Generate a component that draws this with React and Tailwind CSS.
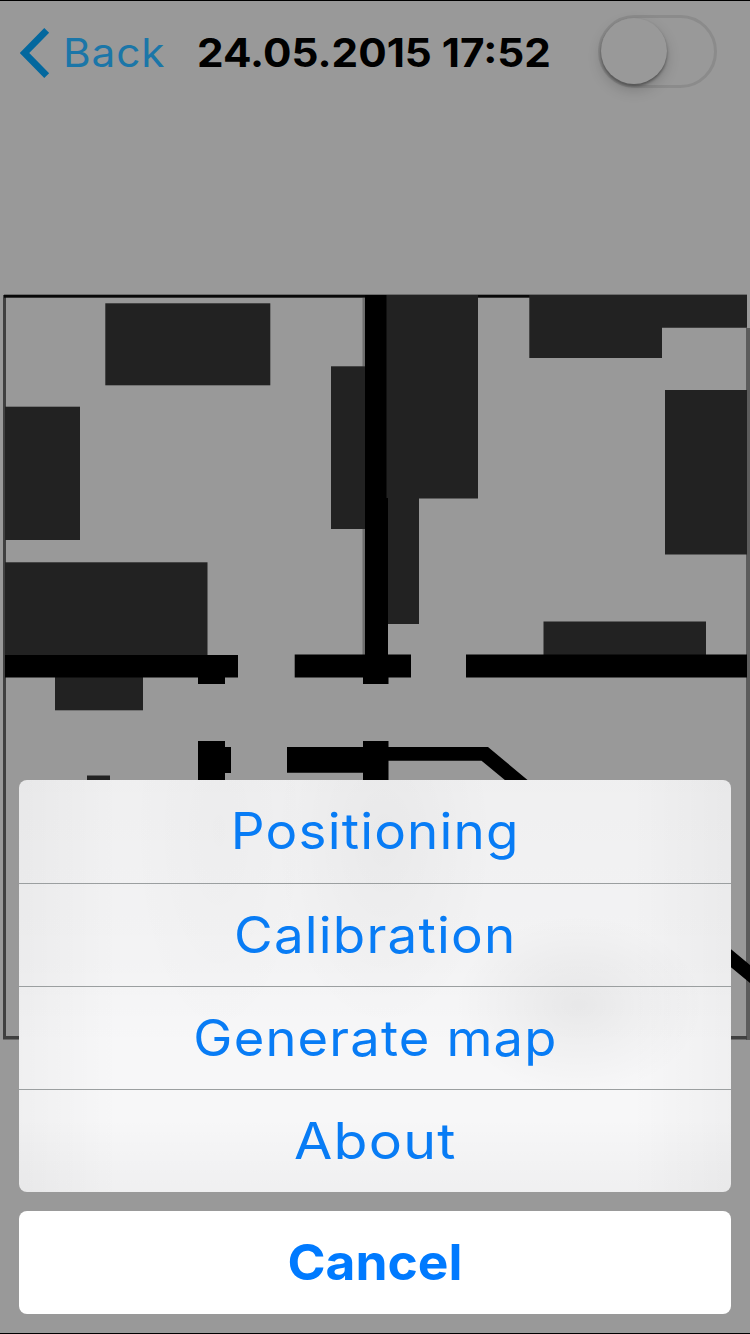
const actions = [
  { label: "Positioning", text: "scale-x-[1.06]" },
  { label: "Calibration", text: "scale-x-[1.06]" },
  { label: "Generate map", text: "scale-x-[1.05]" },
  { label: "About", text: "scale-x-[1.11]" },
];

function Header() {
  return (
    <header className="flex h-[103px] items-center pl-5">
      <button className="flex items-center text-[#04689e]">
        <svg className="h-[52px] w-[30px]" viewBox="0 0 30 52" fill="none" stroke="currentColor" strokeWidth="6.8">
          <path d="M26.7 3.3 4.6 26l22.1 22.7" />
        </svg>
        <span className="ml-[13px] w-[132px] origin-left scale-x-[1.085] whitespace-nowrap text-left text-[39px] leading-none tracking-[0.8px] text-[#1b76a8]">Back</span>
      </button>
      <h1 className="ml-[2px] w-[401px] origin-left scale-x-[1.083] whitespace-nowrap text-[39px] font-bold leading-none text-black">24.05.2015 17:52</h1>
      <div className="-mt-[3px] flex h-[73px] w-[119px] shrink-0 items-center rounded-full border-[3px] border-[#8b8b8b] bg-[#999]">
        <div className="h-[66px] w-[66px] shrink-0 rounded-full bg-[#999] shadow-[0_6px_14px_rgba(0,0,0,0.18),0_2px_3px_rgba(0,0,0,0.38)]" />
      </div>
    </header>
  );
}

function FloorPlan() {
  return (
    <svg className="block h-[760px] w-[750px]" viewBox="0 290 750 760">
      <g fill="#404040">
        <rect x="3" y="295" width="3" height="744" />
        <rect x="746" y="328" width="4" height="712" fill="#5c5c5c" />
        <rect x="3" y="1036" width="744" height="3.5" />
      </g>
      <rect x="4" y="294.7" width="743" height="3" fill="#080808" />
      <g fill="#222">
        <rect x="105.3" y="303.3" width="165" height="82" />
        <rect x="5" y="406.7" width="75" height="133.3" />
        <rect x="331" y="366.6" width="36" height="162.4" />
        <rect x="5" y="562.3" width="202.5" height="93" />
        <rect x="55" y="677" width="88" height="33.3" />
        <path d="M386 295h92v203.5h-59V624h-33z" />
        <path d="M529.3 295H747v32.7h-85v30.2H529.3z" />
        <rect x="665" y="390" width="82" height="164.5" />
        <rect x="543.5" y="621.5" width="162.5" height="34" />
        <rect x="87" y="775.5" width="23" height="12" />
      </g>
      <path d="M362.5 298H366V655h-3.5z" fill="#444" opacity=".5" />
      <path d="M331 366.6h34V529h-34z" fill="#222" />
      <g fill="#000">
        <rect x="365" y="295" width="21.5" height="365" />
        <rect x="384" y="498" width="4" height="160" />
        <path d="M5 655h233v22.5h-13V684h-27v-6.5H5z" />
        <path d="M294.7 654.5H411v23h-22.5V684H363v-6.5h-68.3z" />
        <rect x="466" y="654.5" width="281" height="23" />
        <path d="M198 741h27v6h6v26h-6v70h-27z" />
        <path d="M287 747h76v-6h25.5v6H488l262 218v18L481.5 760.7h-93V850H363v-77.3h-76z" />
      </g>
    </svg>
  );
}

function ActionSheet() {
  return (
    <div className="absolute inset-x-[19px] bottom-[19px] flex flex-col gap-[19px] text-center text-[50px] text-[#087cf5]">
      <div className="overflow-hidden rounded-lg bg-[#f7f7f8] bg-[radial-gradient(ellipse_125px_90px_at_560px_225px,rgba(0,0,0,0.055),transparent),radial-gradient(ellipse_110px_190px_at_365px_60px,rgba(0,0,0,0.03),transparent),radial-gradient(ellipse_90px_220px_at_200px_50px,rgba(0,0,0,0.015),transparent),linear-gradient(to_right,rgba(0,0,0,0.03),transparent_14%,transparent_86%,rgba(0,0,0,0.03)),linear-gradient(to_bottom,rgba(0,0,0,0.03),rgba(0,0,0,0.015)_45%,transparent_65%,transparent_82%,rgba(0,0,0,0.03))]">
        {actions.map((action, index) => (
          <button
            key={action.label}
            className={`flex h-[103px] w-full items-center justify-center whitespace-nowrap pb-px leading-none ${index > 0 ? "border-t border-[#9b9fa0]" : ""}`}
          >
            <span className={`tracking-[1.1px] ${action.text}`}>{action.label}</span>
          </button>
        ))}
      </div>
      <button className="flex h-[103px] items-center justify-center rounded-lg bg-white pb-px font-bold leading-none text-[#007aff]">
        <span className="scale-x-[1.03]">Cancel</span>
      </button>
    </div>
  );
}

export default function App() {
  return (
    <main className="relative flex h-[1334px] w-[750px] flex-col overflow-hidden border-y border-black bg-[#999] font-['Inter',sans-serif]">
      <Header />
      <div className="mt-[186px]">
        <FloorPlan />
      </div>
      <ActionSheet />
    </main>
  );
}
